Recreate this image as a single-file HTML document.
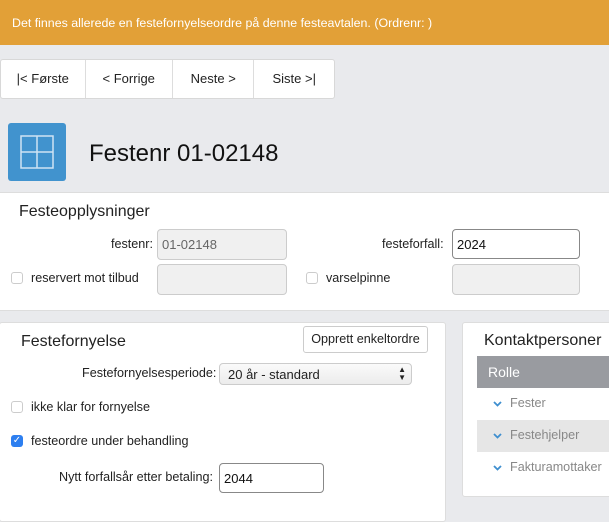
<!DOCTYPE html>
<html><head><meta charset="utf-8"><style>
*{box-sizing:border-box}
body{margin:0;width:609px;height:508px;overflow:hidden;background:#e9eaed;font-family:"Liberation Sans",Arial,sans-serif;color:#222;position:relative}
.a{position:absolute}
.banner{left:0;top:0;width:609px;height:45px;background:#e2a037;color:#fff;font-size:12.4px;padding:16px 0 0 12px}
.nav{left:0;top:59px;width:335px;height:40px;background:#fff;border:1px solid #d8d8d8;border-radius:3px;display:flex}
.nav div{border-right:1px solid #ddd;text-align:center;line-height:38px;font-size:13px}
.nav div:last-child{border:none}
.icon{left:8px;top:123px;width:58px;height:58px;background:#4193ce;border-radius:3px}
.title{left:89px;top:140px;font-size:24px;color:#111}
.panel{background:#fff;border:1px solid #ddd}
.lbl{font-size:12.6px}
.inp{border:1px solid #ccc;border-radius:4px;background:#f0f0f0;font-size:13px;color:#666;padding:7px 4px}
.inp.w{background:#fff;border:1px solid #888;color:#111}
.cb{width:12px;height:12px;border:1px solid #ccc;border-radius:3px;background:#fff}
h3{margin:0;font-weight:normal;font-size:16px;position:absolute}
.ch{display:inline-block;vertical-align:middle;margin-right:8px}
</style></head><body>
<div class="a banner">Det finnes allerede en festefornyelseordre på denne festeavtalen. (Ordrenr: )</div>
<div class="a nav"><div style="width:85px">|&lt; Første</div><div style="width:88px">&lt; Forrige</div><div style="width:82px">Neste &gt;</div><div style="width:80px">Siste &gt;|</div></div>
<div class="a icon"><svg width="58" height="58"><rect x="13" y="13" width="32" height="32" fill="none" stroke="#cfe3f3" stroke-width="1.5"/><line x1="29" y1="13" x2="29" y2="45" stroke="#cfe3f3" stroke-width="1.5"/><line x1="13" y1="29" x2="45" y2="29" stroke="#cfe3f3" stroke-width="1.5"/></svg></div>
<div class="a title">Festenr 01-02148</div>

<div class="a panel" style="left:-1px;top:192px;width:611px;height:119px">
<h3 style="left:19px;top:10px">Festeopplysninger</h3>
</div>
<div class="a lbl" style="left:111px;top:237px">festenr:</div>
<div class="a inp" style="left:157px;top:229px;width:130px;height:31px">01-02148</div>
<div class="a lbl" style="left:382px;top:237px">festeforfall:</div>
<div class="a inp w" style="left:452px;top:229px;width:128px;height:30px">2024</div>
<div class="a cb" style="left:11px;top:272px"></div>
<div class="a lbl" style="left:31px;top:271px">reservert mot tilbud</div>
<div class="a inp" style="left:157px;top:264px;width:130px;height:31px"></div>
<div class="a cb" style="left:306px;top:272px"></div>
<div class="a lbl" style="left:326px;top:271px">varselpinne</div>
<div class="a inp" style="left:452px;top:264px;width:128px;height:31px"></div>

<div class="a panel" style="left:-1px;top:322px;width:447px;height:200px;border-radius:3px">
<h3 style="left:21px;top:10px">Festefornyelse</h3>
</div>
<div class="a" style="left:303px;top:326px;width:125px;height:27px;border:1px solid #ccc;border-radius:3px;background:#fff;font-size:12.6px;text-align:center;line-height:25px">Opprett enkeltordre</div>
<div class="a lbl" style="left:82px;top:366px">Festefornyelsesperiode:</div>
<div class="a" style="left:219px;top:363px;width:193px;height:22px;border:1px solid #ccc;border-radius:4px;background:linear-gradient(#fafafa,#ececec);font-size:13px;padding:3px 0 0 8px">20 år - standard<span style="position:absolute;right:5px;top:2px;font-size:8px;line-height:8px">▲<br>▼</span></div>
<div class="a cb" style="left:11px;top:401px"></div>
<div class="a lbl" style="left:31px;top:400px">ikke klar for fornyelse</div>
<div class="a" style="left:11px;top:435px;width:12px;height:12px;border-radius:3px;background:#2d7ff0;color:#fff;font-size:10px;line-height:12px;text-align:center">✓</div>
<div class="a lbl" style="left:31px;top:434px">festeordre under behandling</div>
<div class="a lbl" style="left:59px;top:470px">Nytt forfallsår etter betaling:</div>
<div class="a inp w" style="left:219px;top:463px;width:105px;height:30px">2044</div>

<div class="a panel" style="left:462px;top:322px;width:160px;height:175px;border-radius:3px">
<h3 style="left:21px;top:9px">Kontaktpersoner</h3>
<div class="a" style="left:14px;top:33px;width:150px;height:32px;background:#999ba0;color:#fff;font-size:14px;padding:8px 0 0 11px">Rolle</div>
<div class="a lbl" style="left:14px;top:65px;width:150px;height:32px;color:#888;padding:8px 0 0 16px"><svg class="ch" width="9" height="6"><path d="M1 1L4.5 4.5L8 1" fill="none" stroke="#3f8fcf" stroke-width="1.8"/></svg>Fester</div>
<div class="a lbl" style="left:14px;top:97px;width:150px;height:32px;background:#e6e6e6;color:#888;padding:8px 0 0 16px"><svg class="ch" width="9" height="6"><path d="M1 1L4.5 4.5L8 1" fill="none" stroke="#3f8fcf" stroke-width="1.8"/></svg>Festehjelper</div>
<div class="a lbl" style="left:14px;top:129px;width:150px;height:32px;color:#888;padding:8px 0 0 16px"><svg class="ch" width="9" height="6"><path d="M1 1L4.5 4.5L8 1" fill="none" stroke="#3f8fcf" stroke-width="1.8"/></svg>Fakturamottaker</div>
</div>
</body></html>
